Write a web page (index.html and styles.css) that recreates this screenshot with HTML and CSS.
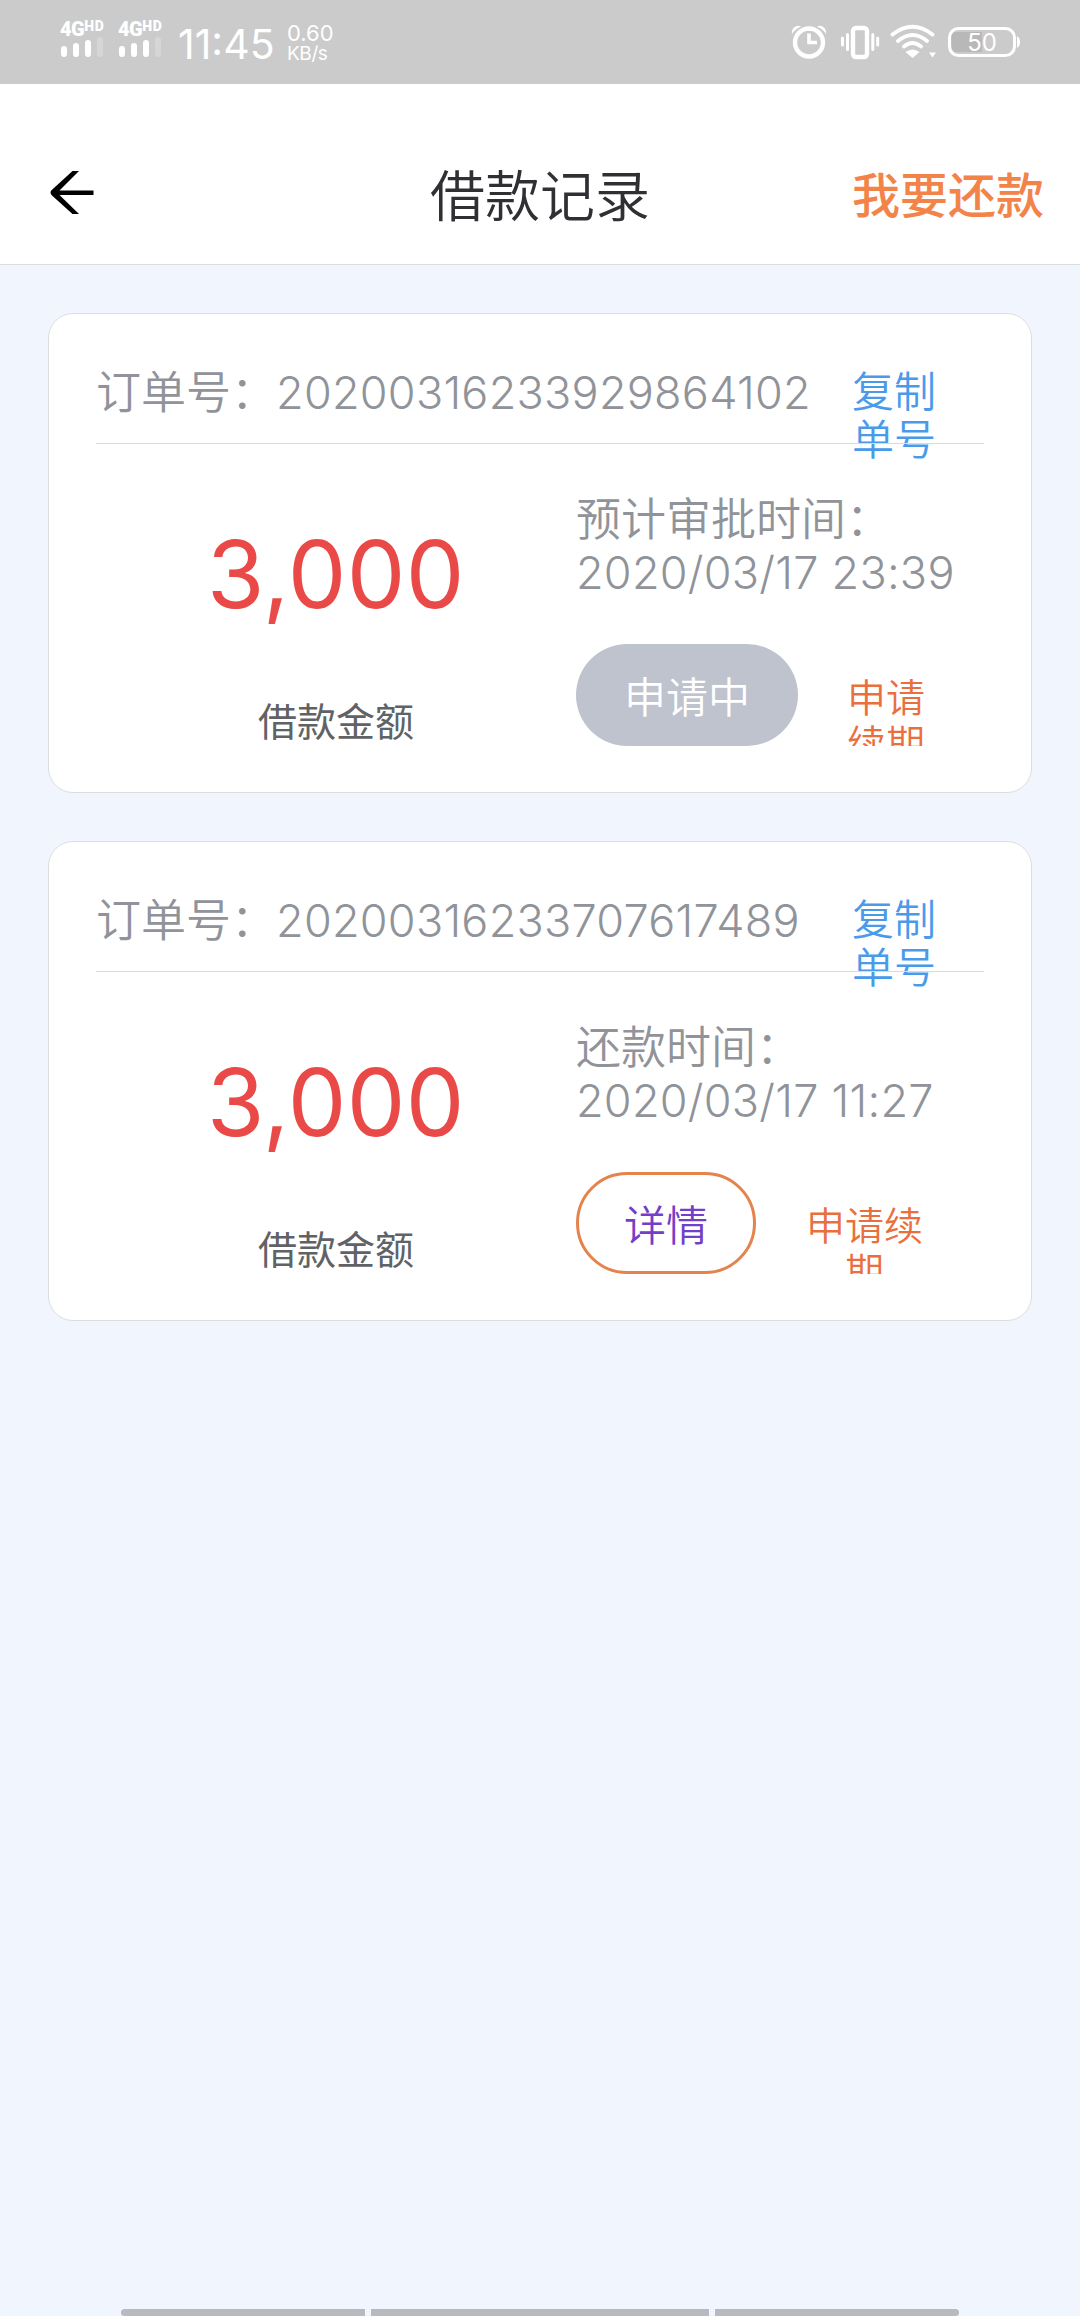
FILE: index.html
```html
<!DOCTYPE html>
<html lang="zh-CN">
<head>
    <meta charset="UTF-8">
    <meta name="viewport" content="width=device-width, initial-scale=1.0">
    <title>借款记录</title>
    <link rel="stylesheet" href="styles.css">
</head>
<body>
    <!-- Status bar -->
    <div class="status-bar">
        <div class="signal">
            <div class="signal-label">4G<span>HD</span></div>
            <div class="signal-bars"><i class="bar-1"></i><i class="bar-2"></i><i class="bar-3"></i><i class="bar-4"></i></div>
        </div>
        <div class="signal">
            <div class="signal-label">4G<span>HD</span></div>
            <div class="signal-bars"><i class="bar-1"></i><i class="bar-2"></i><i class="bar-3"></i><i class="bar-4"></i></div>
        </div>
        <div class="clock">11:45</div>
        <div class="speed">
            <div class="speed-value">0.60</div>
            <div class="speed-unit">KB/s</div>
        </div>
        <svg class="status-icons" width="232" height="40" viewBox="0 0 232 40" fill="none" stroke="#fff" stroke-linecap="round">
            <!-- alarm -->
            <circle cx="19" cy="22.5" r="14" stroke-width="4.4"/>
            <path d="M19 13.500V22.5H27" stroke-width="3.6" stroke-linecap="butt"/>
            <path d="M2 14C1 9 6 4 11 6.5Q5 9 2 14ZM36 14C37 9 32 4 27 6.5Q33 9 36 14Z" fill="#fff" stroke="none"/>
            <!-- vibrate -->
            <rect x="63" y="8" width="14" height="29" rx="3" stroke-width="4.4"/>
            <path d="M52.500 18V25M57.500 14.500V29.500M82.800 14.500V29.500M87.700 18V25" stroke-width="3"/>
            <!-- wifi -->
            <path d="M102.500 14.500Q122.500 -1 142.500 14.500M108 21Q122.500 9 137 21M114 26.500Q122.500 19.500 131 26.500" stroke-width="3.800"/>
            <path d="M115.500 32Q122.500 27 129.500 32L122.500 38ZM139 32.500H146L142.500 37.500Z" fill="#fff" stroke="none"/>
            <!-- battery -->
            <path d="M166.500 12H192V32H166.500Q161.500 32 161.500 27V17Q161.500 12 166.500 12Z" fill="#b8b8b8" stroke="none"/>
            <rect x="159.500" y="8.500" width="65" height="27" rx="9" stroke-width="3"/>
            <path d="M227 16Q230 18 230 22T227 28Z" fill="#fff" stroke="none"/>
            <text x="192" y="31" text-anchor="middle" class="battery-text">50</text>
        </svg>
    </div>

    <!-- Page header -->
    <div class="header">
        <a href="#" class="back">
            <svg width="44" height="44" viewBox="0 0 44 44">
                <path d="M22.500 0H29L9.500 19.500H43.500V24H9.500L29 43H22.500L2 24.500Q-1 21.500 2 18.800Z" fill="#000"/>
            </svg>
        </a>
        <h1 class="title">借款记录</h1>
        <a href="#" class="repay">我要还款</a>
    </div>

    <!-- Loan records -->
    <div class="records">
        <div class="card">
            <div class="card-top">
                <span class="order-no">订单号：<span class="num">20200316233929864102</span></span>
                <a href="#" class="copy">复制单号</a>
            </div>
            <div class="card-body">
                <div class="amount">
                    <div class="amount-num">3,000</div>
                    <div class="amount-label">借款金额</div>
                </div>
                <div class="info">
                    <div class="time">预计审批时间：<br><span class="num">2020/03/17 23:39</span></div>
                    <div class="actions">
                        <a href="#" class="btn btn-disabled">申请中</a>
                        <a href="#" class="renew">申请续期</a>
                    </div>
                </div>
            </div>
        </div>

        <div class="card">
            <div class="card-top">
                <span class="order-no">订单号：<span class="num">20200316233707617489</span></span>
                <a href="#" class="copy">复制单号</a>
            </div>
            <div class="card-body">
                <div class="amount">
                    <div class="amount-num">3,000</div>
                    <div class="amount-label">借款金额</div>
                </div>
                <div class="info">
                    <div class="time">还款时间：<br><span class="num">2020/03/17 11:27</span></div>
                    <div class="actions">
                        <a href="#" class="btn btn-detail">详情</a>
                        <a href="#" class="renew renew-wide">申请续期</a>
                    </div>
                </div>
            </div>
        </div>
    </div>

    <!-- Gesture hints -->
    <div class="nav-hints">
        <div class="hint hint-left"></div>
        <div class="hint hint-middle"></div>
        <div class="hint hint-right"></div>
    </div>
</body>
</html>
```
FILE: styles.css
```css
* {
    box-sizing: border-box;
}

body {
    margin: 0;
    height: 2316px;
    display: flex;
    flex-direction: column;
    overflow: hidden;
    background-color: #f1f5fd;
    font-family: "Noto Sans CJK SC", sans-serif;
    font-weight: 350;
}

a {
    text-decoration: none;
}

/* Status bar */
.status-bar {
    display: flex;
    align-items: flex-start;
    height: 84px;
    padding: 20px 58px 0 60px;
    background-color: #cbcbcb;
    color: #fff;
    font-family: Inter, sans-serif;
}

.signal {
    width: 46px;
    margin-right: 12px;
}

.signal-label {
    display: flex;
    align-items: flex-start;
    height: 17px;
    font: 900 20px/18px Roboto, sans-serif;
    letter-spacing: -0.5px;
}

.signal-label span {
    font: 900 14px/13px Roboto, sans-serif;
    letter-spacing: 0.8px;
}

.signal-bars {
    display: flex;
    align-items: flex-end;
    gap: 6px;
    height: 20px;
    padding-left: 1px;
}

.signal-bars i {
    width: 6px;
    border-radius: 3px;
    background-color: #fff;
}

.signal-bars .bar-1 {
    height: 11px;
}

.signal-bars .bar-2 {
    height: 14px;
}

.signal-bars .bar-3 {
    height: 17px;
}

.signal-bars .bar-4 {
    height: 20px;
    background-color: #d6d6d6;
}

.clock {
    width: 110px;
    padding-left: 2px;
    font-size: 41px;
    font-weight: 400;
    line-height: 49px;
}

.speed {
    padding: 2px 0 0 1px;
    font-weight: 400;
}

.speed-value {
    font-size: 22px;
    line-height: 22px;
}

.speed-unit {
    font-size: 19px;
    line-height: 19px;
    letter-spacing: -0.4px;
}

.status-icons {
    margin-left: auto;
}

.battery-text {
    fill: #fff;
    stroke: none;
    font: 400 24px Inter, sans-serif;
}

/* Page header */
.header {
    display: grid;
    grid-template-columns: 1fr auto 1fr;
    align-items: center;
    height: 181px;
    padding: 35px 36px 0;
    border-bottom: 1px solid #dcdcde;
    background-color: #fff;
}

.back {
    padding: 2px 0 0 14px;
}

.back svg {
    display: block;
}

.title {
    margin: 0;
    font-size: 55px;
    font-weight: 350;
    line-height: 80px;
    color: #303034;
}

.repay {
    justify-self: end;
    font-size: 48px;
    font-weight: 500;
    color: #f2844a;
}

/* Loan records */
.records {
    display: flex;
    flex-direction: column;
    gap: 48px;
    padding: 48px;
}

.card {
    height: 480px;
    padding: 0 47px;
    border: 1px solid #dcdde0;
    border-radius: 25px;
    background-color: #fff;
}

.card-top {
    display: flex;
    height: 129px;
    padding-top: 51px;
    color: #909399;
}

.order-no {
    width: 756px;
    font-size: 45px;
    line-height: 50px;
    white-space: nowrap;
}

.num {
    font-family: Inter, sans-serif;
    font-weight: 300;
    letter-spacing: 0.25px;
}

.copy {
    width: 84px;
    font-size: 42px;
    line-height: 48px;
    color: #4a9aea;
}

/* the divider runs over the second line of the copy link */
.card-body {
    position: relative;
    display: flex;
    border-top: 1px solid #dadbdd;
}

.amount {
    width: 480px;
    text-align: center;
}

.amount-num {
    padding-top: 75px;
    font-family: Inter, sans-serif;
    font-size: 93px;
    font-weight: 400;
    line-height: 110px;
    letter-spacing: 0.4px;
    color: #ea4a47;
}

.amount-label {
    padding-top: 63px;
    font-size: 39px;
    font-weight: 400;
    line-height: 54px;
    color: #606266;
}

.info {
    flex: 1;
    padding-top: 46px;
}

.time {
    font-size: 45px;
    line-height: 53px;
    color: #909399;
}

.actions {
    display: flex;
    height: 102px;
    margin-top: 45px;
    overflow: hidden;
}

.btn {
    height: 102px;
    padding: 0 48px;
    border-radius: 51px;
    font-size: 42px;
    line-height: 101px;
}

.btn-disabled {
    background-color: #bec3cd;
    color: #fff;
}

.btn-detail {
    padding: 0 45px;
    border: 3px solid #e5834c;
    line-height: 95px;
    color: #733fc8;
}

.renew {
    width: 78px;
    margin: 28px 0 0 49px;
    font-size: 39px;
    line-height: 46px;
    text-align: center;
    color: #ea6f3e;
}

.renew-wide {
    width: 117px;
    margin-left: 50px;
}

/* Gesture hints */
.nav-hints {
    display: flex;
    gap: 6px;
    margin-top: auto;
    padding: 0 121px;
}

.hint {
    height: 7px;
    background-color: #b7babf;
}

.hint-left {
    width: 244px;
    border-radius: 4px 0 0 4px;
}

.hint-middle {
    width: 338px;
}

.hint-right {
    width: 244px;
    border-radius: 0 4px 4px 0;
}
```
